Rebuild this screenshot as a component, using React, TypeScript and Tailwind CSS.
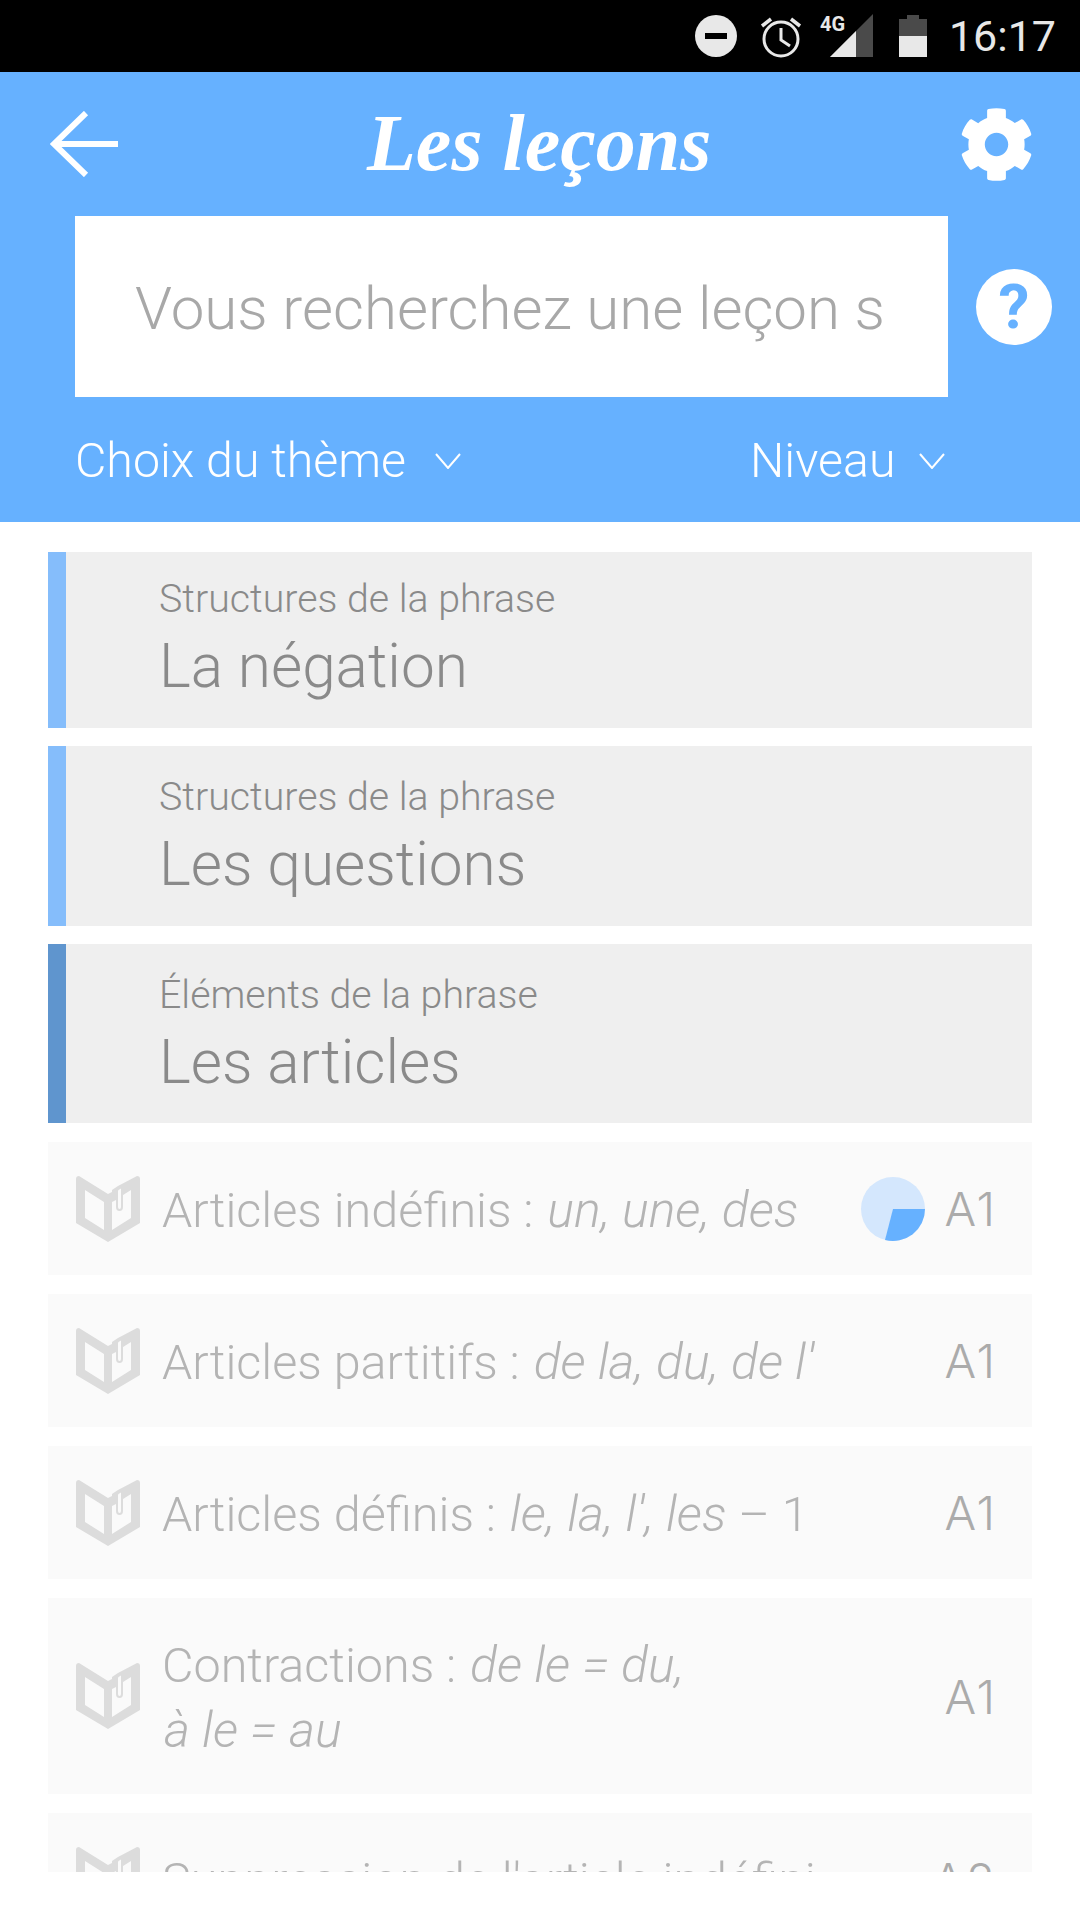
import { FaCog } from 'react-icons/fa';

const rubriques = [
  { sous: 'Structures de la phrase', titre: 'La négation', h: 'h-[176px]', barre: 'bg-[#85bdfb]', pt: 'pt-[24px]' },
  { sous: 'Structures de la phrase', titre: 'Les questions', h: 'h-[180px]', barre: 'bg-[#85bdfb]', pt: 'pt-[28px]' },
  { sous: 'Éléments de la phrase', titre: 'Les articles', h: 'h-[179px]', barre: 'bg-[#5f95ce]', pt: 'pt-[28px]' },
];

function Chevron() {
  return (
    <svg width="26" height="16" viewBox="0 0 26 16" fill="none" stroke="white" strokeWidth="2">
      <path d="M1 1 L13 15 L25 1" />
    </svg>
  );
}

function Livre() {
  return (
    <svg width="64" height="66" viewBox="0 0 64 66" className="shrink-0">
      <path
        fillRule="evenodd"
        fill="#dcdcdc"
        d="M3 0 L32 18 L36 16 L36 14 L42 10 L61 0 Q64 0 64 3 L64 47 L32 66 L0 47 L0 3 Q0 0 3 0 Z M9 14 L9 42 L28 54 L28 26 Z M36 26 L36 54 L55 42 L55 14 L47 19 L47 31 Q47 35 43.5 35 Q40 35 40 31 L40 24 Z"
      />
      <path d="M42.5 14 L45 12.5 L45 31 Q45 33 43.5 33 Q42 33 42 31 L42 15 Z" fill="#fafafa" />
    </svg>
  );
}

function Camembert() {
  return (
    <svg width="66" height="66" viewBox="-33 -33 66 66" className="shrink-0">
      <circle r="32" fill="#d4e7fd" />
      <path d="M0 0 L32 0 A32 32 0 0 1 -8 31 Z" fill="#66b1ff" />
    </svg>
  );
}

function Ligne({ children, progres, niveau, h = 'h-[133px]' }: { children: React.ReactNode; progres?: boolean; niveau: string; h?: string }) {
  return (
    <div className={`flex items-center ${h} bg-[#fafafa] pl-[28px] pr-[35px] shrink-0`}>
      <Livre />
      <div className="ml-[22px] pt-[3px] flex-1 text-[48.5px] leading-[64px] font-light text-[#b4b4b4] whitespace-nowrap">{children}</div>
      {progres && <Camembert />}
      <div className="ml-[18px] pt-[2px] text-[47px] tracking-[2px] font-light text-[#ababab] font-['Inter',sans-serif]">{niveau}</div>
    </div>
  );
}

function Ital({ children }: { children: React.ReactNode }) {
  return <i className="ml-[2px] text-[50px]">{children}</i>;
}

export default function App() {
  return (
    <div className="w-[1080px] h-[1920px] bg-white overflow-hidden font-['Roboto',sans-serif]">
      {/* barre d'etat */}
      <div className="h-[72px] bg-black flex items-center justify-end pr-[24px] text-[#e8e8e8]">
        <svg width="42" height="42" viewBox="0 0 42 42">
          <circle cx="21" cy="21" r="21" fill="#e8e8e8" />
          <rect x="10" y="18" width="22" height="6" fill="#000" />
        </svg>
        <svg width="44" height="44" viewBox="0 0 44 44" className="ml-[22px]" fill="none" stroke="#e8e8e8" strokeWidth="3">
          <circle cx="22" cy="25" r="17" />
          <path d="M22 14 L22 26 L31 32" />
          <path d="M3 12 L12 5 M41 12 L32 5" strokeWidth="3.5" />
        </svg>
        <div className="relative w-[54px] h-[44px] ml-[17px]">
          <span className="absolute left-0 top-0 text-[20px] leading-[20px] font-bold">4G</span>
          <svg width="44" height="44" viewBox="0 0 44 44" className="absolute left-[10px] top-0">
            <path d="M43 0 L43 43 L0 43 Z" fill="#4a4a4a" />
            <path d="M26 17 L26 43 L0 43 Z" fill="#e8e8e8" />
          </svg>
        </div>
        <svg width="28" height="42" viewBox="0 0 28 42" className="ml-[25px]">
          <path d="M8 0 H20 V4 H28 V21 H0 V4 H8 Z" fill="#4a4a4a" />
          <rect y="21" width="28" height="21" fill="#e8e8e8" />
        </svg>
        <span className="ml-[22px] text-[43px] leading-none">16:17</span>
      </div>

      {/* entete */}
      <div className="h-[450px] bg-[#66b1ff] flex flex-col">
        <div className="h-[144px] flex items-center justify-between pl-[50px] pr-[46px] relative">
          <svg width="68" height="66" viewBox="0 0 68 66" fill="none" stroke="white" strokeWidth="6">
            <path d="M36 2 L4 33 L36 64" />
            <path d="M4 33 H68" />
          </svg>
          <div className="absolute left-[367px] top-[16px] text-[80px] leading-[110px] text-white font-bold italic font-['Liberation_Serif',cursive] whitespace-nowrap">
            Les leçons
          </div>
          <FaCog size={75} color="white" />
        </div>
        <div className="flex items-center pl-[75px]">
          <input
            readOnly
            placeholder="Vous recherchez une leçon spécifique ?"
            className="w-[873px] h-[181px] bg-white px-[60px] pt-[4px] text-[60px] font-light placeholder:text-[#a8a8a8] outline-none"
          />
          <div className="ml-[28px] w-[76px] h-[76px] rounded-full bg-white flex items-center justify-center text-[62px] font-bold text-[#66b1ff]">?</div>
        </div>
        <div className="flex items-center pl-[75px] pt-[34px] text-[48.3px] leading-[60px] font-light text-white">
          <span className="w-[360px]">Choix du thème</span>
          <Chevron />
          <span className="ml-[289px] w-[169px]">Niveau</span>
          <Chevron />
        </div>
      </div>

      {/* liste */}
      <div className="h-[1350px] overflow-hidden px-[48px] pt-[30px] flex flex-col gap-[19px]">
        <div className="flex flex-col gap-[18px]">
          {rubriques.map((r) => (
            <div key={r.titre} className={`flex ${r.h} bg-[#efefef] shrink-0`}>
              <div className={`w-[18px] ${r.barre}`} />
              <div className={`pl-[93px] ${r.pt} text-[#8a8a8a] font-light`}>
                <div className="text-[39.3px] leading-[46px]">{r.sous}</div>
                <div className="text-[60.3px] leading-[76px] mt-[7px]">{r.titre}</div>
              </div>
            </div>
          ))}
        </div>
        <Ligne niveau="A1" progres>
          Articles indéfinis : <Ital>un, une, des</Ital>
        </Ligne>
        <Ligne niveau="A1">
          Articles partitifs : <Ital>de la, du, de l'</Ital>
        </Ligne>
        <Ligne niveau="A1">
          Articles définis : <Ital>le, la, l', les</Ital> – 1
        </Ligne>
        <Ligne niveau="A1" h="h-[196px]">
          Contractions : <Ital>de le = du,</Ital>
          <br />
          <Ital>à le = au</Ital>
        </Ligne>
        <Ligne niveau="A2">Suppression de l'article indéfini</Ligne>
      </div>
    </div>
  );
}
